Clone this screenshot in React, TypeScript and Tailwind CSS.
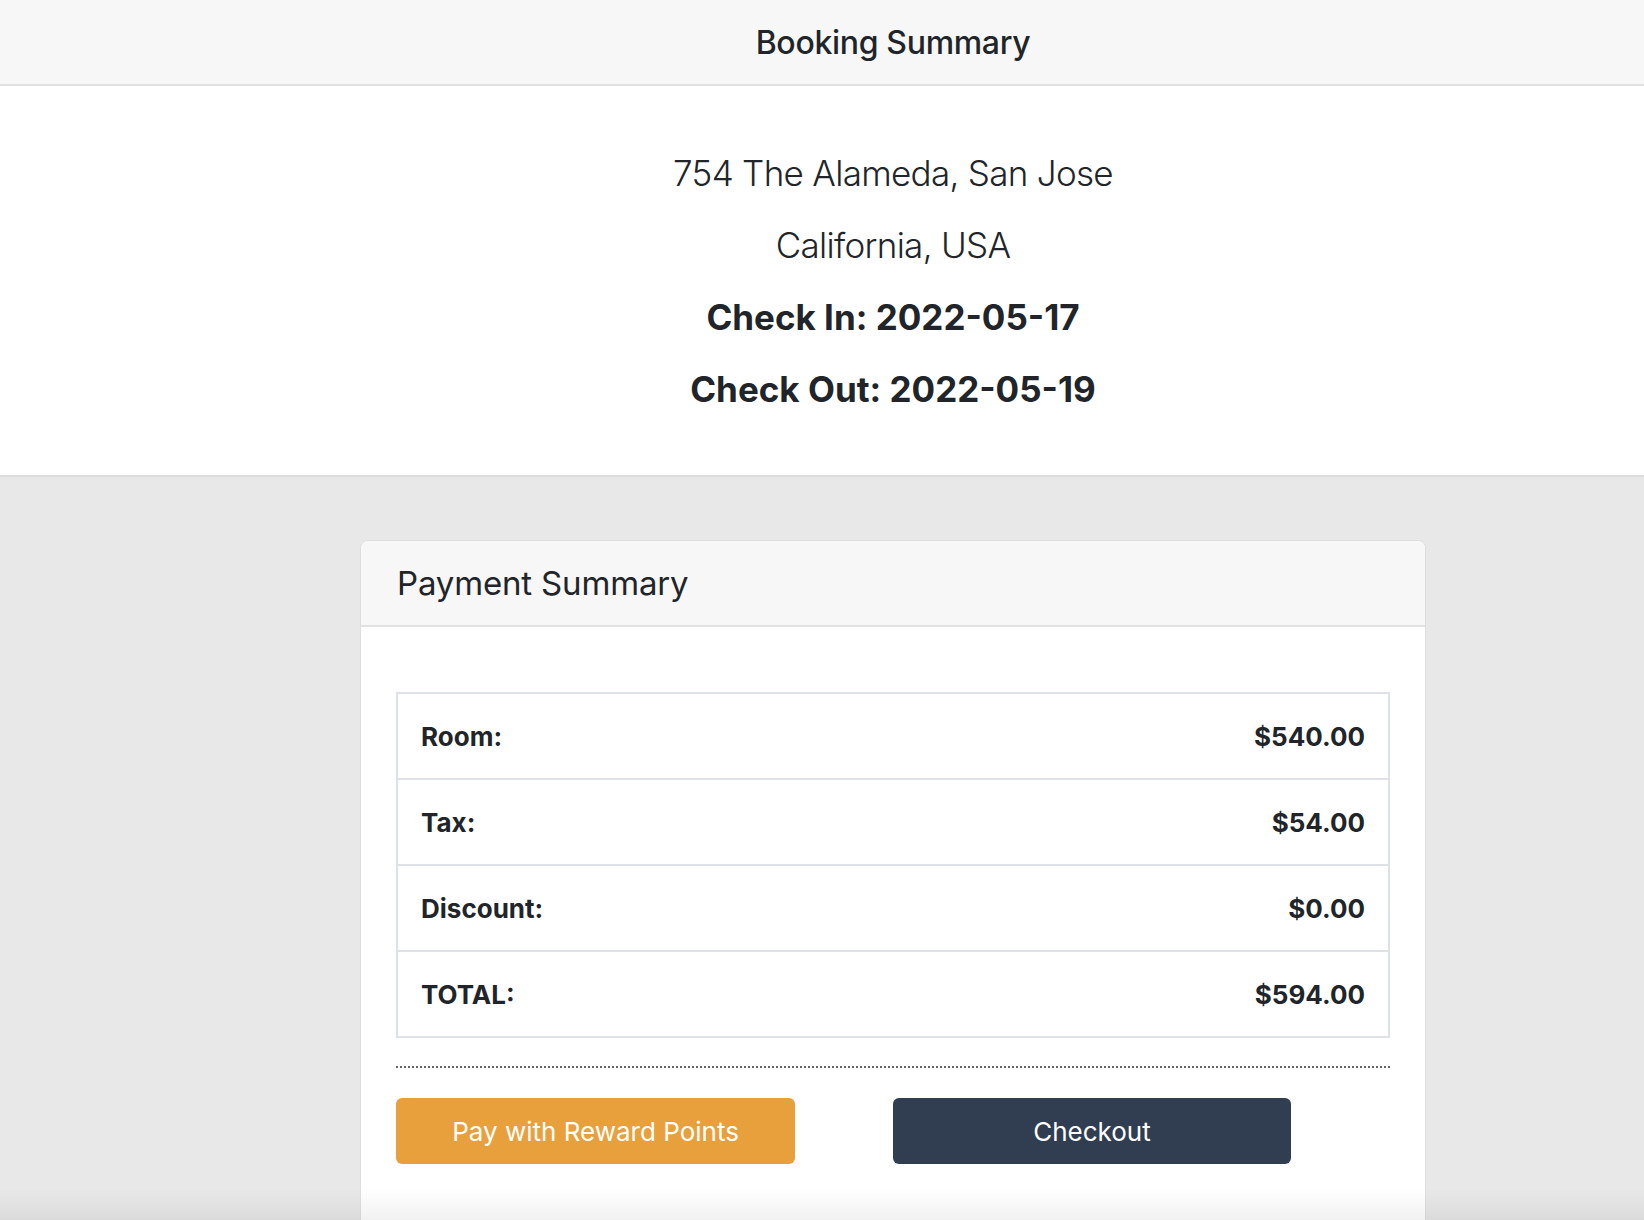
import React from "react";

const rows = [
  { label: "Room:", value: "$540.00" },
  { label: "Tax:", value: "$54.00" },
  { label: "Discount:", value: "$0.00" },
  { label: "TOTAL:", value: "$594.00" },
];

const App = () => {
  return (
    <div className="min-h-screen bg-[#e8e8e8] text-[#212529] font-['Inter',sans-serif] relative overflow-hidden">
      {/* Top bar */}
      <div className="h-[86px] bg-[#f7f7f7] border-b-2 border-[#e0e0e0] flex items-center justify-center pl-[142px] pt-[2px]">
        <h1 className="text-[32px] font-medium leading-none tracking-[-0.01em]">Booking Summary</h1>
      </div>

      {/* Booking details */}
      <div className="bg-white border-b-2 border-[#dcdcdc] pt-[51px] pb-[50px] pl-[142px] flex flex-col items-center">
        <p className="h-[72px] leading-[72px] text-[35px] font-light tracking-[-0.02em]">754 The Alameda, San Jose</p>
        <p className="h-[72px] leading-[72px] text-[35px] font-light tracking-[-0.02em]">California, USA</p>
        <p className="h-[72px] leading-[72px] text-[35px] font-bold">Check In: 2022-05-17</p>
        <p className="h-[72px] leading-[72px] text-[35px] font-bold">Check Out: 2022-05-19</p>
      </div>

      {/* Payment card */}
      <div className="pl-[142px] pt-[63px] flex justify-center">
        <div className="w-[1066px] bg-white border border-[#dedede] rounded-[8px] overflow-hidden">
          <div className="h-[86px] bg-[#f7f7f7] border-b-2 border-[#e2e2e2] flex items-center px-[36px] pt-[1px]">
            <h2 className="text-[33px] font-normal leading-none tracking-[-0.005em]">Payment Summary</h2>
          </div>
          <div className="px-[35px] pt-[65px] pb-[80px]">
            <div className="border-2 border-[#dee2e6]">
              {rows.map((r, i) => (
                <div
                  key={r.label}
                  className={`flex items-center justify-between px-[23px] text-[26px] font-bold ${i > 0 ? "h-[86px] border-t-2 border-[#dee2e6]" : "h-[84px]"}`}
                >
                  <span>{r.label}</span>
                  <span>{r.value}</span>
                </div>
              ))}
            </div>
            <div className="mt-[28px] border-t-2 border-dotted border-[#666666]" />
            <div className="mt-[30px] grid grid-cols-2">
              <button className="w-[399px] h-[66px] rounded-[6px] bg-[#e8a03c] text-white text-[26px] font-normal">
                Pay with Reward Points
              </button>
              <button className="w-[398px] h-[66px] rounded-[6px] bg-[#313d50] text-white text-[26px] font-normal">
                Checkout
              </button>
            </div>
          </div>
        </div>
      </div>

      {/* bottom fade */}
      <div className="absolute left-0 right-0 bottom-0 h-[56px] bg-gradient-to-b from-transparent to-black/10 pointer-events-none" />
    </div>
  );
};

export default App;
